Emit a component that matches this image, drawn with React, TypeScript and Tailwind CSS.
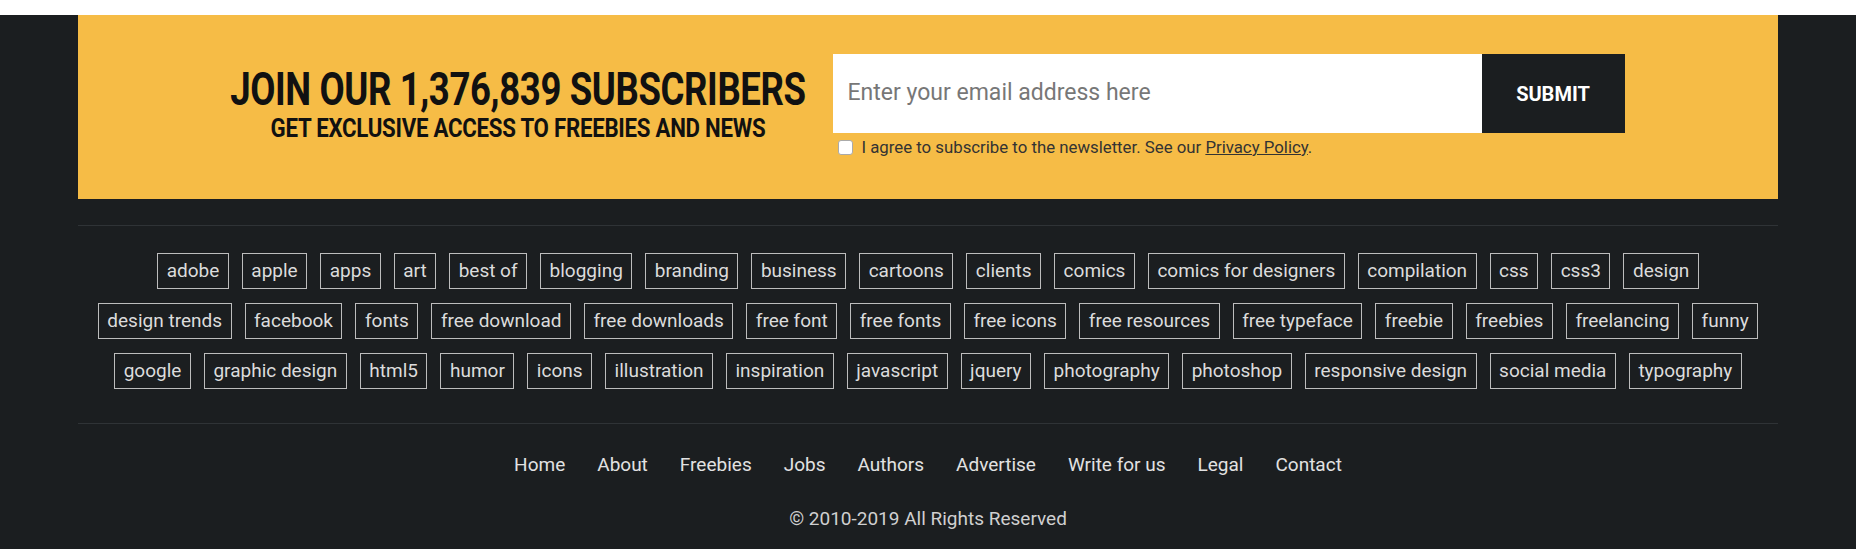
import React from 'react';

const tagRows: string[][] = [
  ['adobe', 'apple', 'apps', 'art', 'best of', 'blogging', 'branding', 'business', 'cartoons', 'clients', 'comics', 'comics for designers', 'compilation', 'css', 'css3', 'design'],
  ['design trends', 'facebook', 'fonts', 'free download', 'free downloads', 'free font', 'free fonts', 'free icons', 'free resources', 'free typeface', 'freebie', 'freebies', 'freelancing', 'funny'],
  ['google', 'graphic design', 'html5', 'humor', 'icons', 'illustration', 'inspiration', 'javascript', 'jquery', 'photography', 'photoshop', 'responsive design', 'social media', 'typography'],
];

const navLinks = ['Home', 'About', 'Freebies', 'Jobs', 'Authors', 'Advertise', 'Write for us', 'Legal', 'Contact'];

const Newsletter: React.FC = () => {
  return (
    <div className="bg-[#f6bc46] h-[184px] flex items-start justify-center gap-[28px]">
      {/* Headline, condensed */}
      <div className="w-[573px] mt-[51px] flex flex-col items-center text-[#111] font-bold">
        <div className="w-full flex justify-center">
          <span className="shrink-0 whitespace-nowrap text-[46px] leading-[46px] scale-x-[0.795] tracking-[-0.5px]">
            JOIN OUR 1,376,839 SUBSCRIBERS
          </span>
        </div>
        <div className="w-full flex justify-center mt-[4px]">
          <span className="shrink-0 whitespace-nowrap text-[25px] leading-[25px] scale-x-[0.89] tracking-[-0.3px]">
            GET EXCLUSIVE ACCESS TO FREEBIES AND NEWS
          </span>
        </div>
      </div>

      {/* Signup form */}
      <div className="w-[792px] mt-[39px]">
        <form className="flex h-[79px]" onSubmit={(e) => e.preventDefault()}>
          <input
            type="email"
            placeholder="Enter your email address here"
            className="flex-1 bg-white px-[15px] text-[23px] text-[#333] placeholder:text-[#777] outline-none"
          />
          <button type="submit" className="w-[143px] bg-[#1b1e20] text-white text-[20px] font-bold">
            SUBMIT
          </button>
        </form>
        <label className="flex items-center gap-[9px] mt-[3px] pl-[5px] text-[16.8px] text-[#333] leading-[22px]">
          <input type="checkbox" className="appearance-none w-[15px] h-[15px] bg-white border border-[#aaa] rounded-[3px]" />
          <span>
            I agree to subscribe to the newsletter. See our <a href="#" className="underline">Privacy Policy</a>.
          </span>
        </label>
      </div>
    </div>
  );
};

export default function App() {
  return (
    <div className="bg-white pt-[15px] font-['Roboto','Liberation_Sans',sans-serif]">
      <footer className="bg-[#1b1e20]">
        <div className="w-[1700px] mx-auto">
          <Newsletter />

          <div className="mt-[26px] border-t border-[#2f3336] pt-[27px] pb-[34px] flex flex-col gap-[14px]">
            {tagRows.map((row, i) => (
              <div key={i} className="flex justify-center gap-[13px]">
                {row.map((tag) => (
                  <a
                    key={tag}
                    href="#"
                    className="h-[36px] px-[8.5px] border border-[#bdbdbd] text-[#dcdcdc] text-[19px] leading-[34px] whitespace-nowrap"
                  >
                    {tag}
                  </a>
                ))}
              </div>
            ))}
          </div>

          <div className="border-t border-[#2f3336] pt-[29px] pb-[18px] flex flex-col items-center">
            <nav className="flex gap-[32px] text-[19px] leading-[24px] text-[#e2e2e2]">
              {navLinks.map((l) => (
                <a key={l} href="#">{l}</a>
              ))}
            </nav>
            <p className="mt-[30px] text-[19px] leading-[24px] text-[#d0d0d0]">© 2010-2019 All Rights Reserved</p>
          </div>
        </div>
      </footer>
    </div>
  );
}
